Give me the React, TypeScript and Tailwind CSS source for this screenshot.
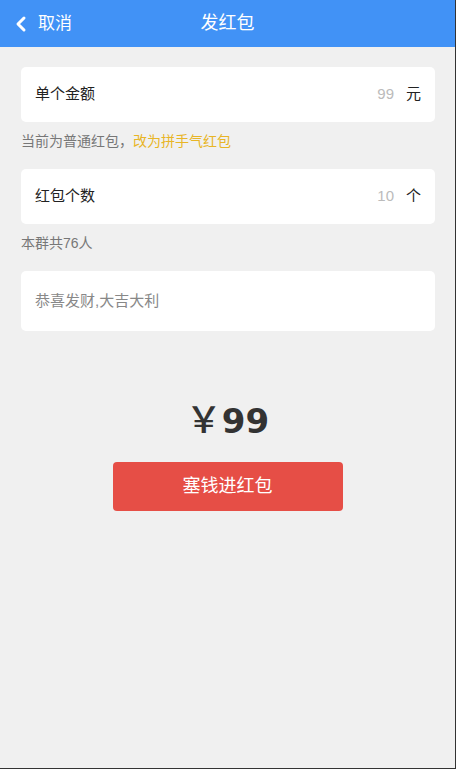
import { ChevronLeft } from "lucide-react";

const font = { fontFamily: '"Liberation Sans", "Noto Sans CJK SC", sans-serif' };

function Row({ label, value, unit }: { label: string; value: string; unit: string }) {
  return (
    <div className="flex items-center h-[55px] bg-white rounded-[5px] px-[14px]">
      <span className="flex-1 text-[15px] text-[#222]">{label}</span>
      <span className="text-[15px] text-[#bbb] mr-[12px]">{value}</span>
      <span className="text-[15px] text-[#222]">{unit}</span>
    </div>
  );
}

export default function App() {
  return (
    <div style={font} className="w-[456px] h-[769px] bg-[#f0f0f0] border-r border-b border-[#333] flex flex-col">
      {/* header */}
      <div className="relative h-[47px] bg-[#4192f6] flex items-center justify-center text-white shrink-0">
        <div className="absolute left-[9px] top-0 h-full flex items-center">
          <ChevronLeft size={24} strokeWidth={3} />
          <span className="text-[17px] ml-[5px]">取消</span>
        </div>
        <span className="text-[18px]">发红包</span>
      </div>

      <div className="px-[21px] pr-[20px] pt-[20px] flex flex-col">
        <Row label="单个金额" value="99" unit="元" />
        <p className="text-[14px] text-[#777] mt-[10px] mb-[18px] leading-[19px]">
          当前为普通红包，<span className="text-[#e8b526]">改为拼手气红包</span>
        </p>
        <Row label="红包个数" value="10" unit="个" />
        <p className="text-[14px] text-[#777] mt-[10px] mb-[18px] leading-[19px]">本群共76人</p>
        <div className="h-[60px] bg-white rounded-[5px] px-[14px] flex items-center">
          <span className="text-[15px] text-[#888]">恭喜发财,大吉大利</span>
        </div>
      </div>

      <div className="flex flex-col items-center mt-[68px]">
        <div className="flex items-baseline text-[#333] leading-none">
          <span className="text-[36px] font-medium" style={{ fontFamily: '"Noto Sans CJK SC", sans-serif' }}>￥</span>
          <span className="text-[34px] font-bold" style={{ fontFamily: '"DejaVu Sans", sans-serif' }}>99</span>
        </div>
        <button className="mt-[24px] w-[230px] h-[49px] bg-[#e64e46] rounded-[4px] text-white text-[18px]">
          塞钱进红包
        </button>
      </div>
    </div>
  );
}
